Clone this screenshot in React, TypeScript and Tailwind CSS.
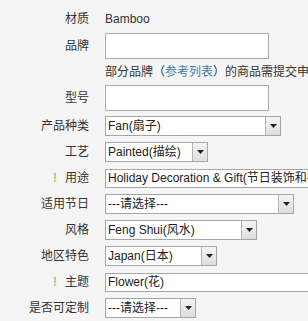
import React from "react";

const font = { fontFamily: '"Liberation Sans", "Noto Sans CJK SC", sans-serif' };

function Label({ text, mark }: { text: string; mark?: boolean }) {
  return (
    <div className="w-[90px] shrink-0 text-right text-[12px] text-[#333] pr-[1px] whitespace-nowrap">
      {mark && <span className="text-[#a3c96a] font-bold mr-[8px]">!</span>}
      {text}
    </div>
  );
}

function Select({ value, width }: { value: string; width: number }) {
  return (
    <div className="flex h-[20px] bg-white border border-[#a7a7a7] shrink-0" style={{ width }}>
      <div className="flex-1 px-[2px] text-[12px] leading-[18px] text-[#222] whitespace-nowrap overflow-hidden">{value}</div>
      <div className="w-[15px] border-l border-[#b4b4b4] bg-gradient-to-b from-[#f4f4f4] to-[#dedede] flex items-center justify-center">
        <svg width="7" height="4" viewBox="0 0 7 4">
          <path d="M0 0h7L3.5 4z" fill="#222" />
        </svg>
      </div>
    </div>
  );
}

function TextBox({ value }: { value: string }) {
  return (
    <div className="h-[19px] w-[240px] shrink-0 bg-white border border-[#a7a7a7] px-[2px] text-[12px] leading-[17px] text-[#222] whitespace-nowrap overflow-hidden">
      {value}
    </div>
  );
}

export default function App() {
  const selects: { label: string; mark?: boolean; value: string; width?: number; text?: boolean }[] = [
    { label: "产品种类", value: "Fan(扇子)", width: 176 },
    { label: "工艺", value: "Painted(描绘)", width: 103 },
    { label: "用途", mark: true, value: "Holiday Decoration & Gift(节日装饰和礼品)", text: true },
    { label: "适用节日", value: "---请选择---", width: 189 },
    { label: "风格", value: "Feng Shui(风水)", width: 152 },
    { label: "地区特色", value: "Japan(日本)", width: 112 },
    { label: "主题", mark: true, value: "Flower(花)", text: true },
    { label: "是否可定制", value: "---请选择---", width: 91 },
  ];

  return (
    <div className="w-[308px] h-[321px] overflow-hidden bg-[#f5f5f5] pt-[9px]" style={font}>
      <div className="flex items-center h-[20px] gap-[15px]">
        <Label text="材质" />
        <span className="text-[12px] text-[#333]">Bamboo</span>
      </div>

      <div className="flex items-center h-[26px] gap-[15px] mt-[4px]">
        <Label text="品牌" />
        <div className="w-[164px] h-[26px] bg-white border border-[#a5acb4]" />
      </div>

      <div className="flex items-center h-[26px] gap-[15px]">
        <div className="w-[90px] shrink-0" />
        <span className="text-[12px] text-[#333] whitespace-nowrap">
          部分品牌（<span className="text-[#3b7ea8]">参考列表</span>）的商品需提交申请
        </span>
      </div>

      <div className="flex items-center h-[26px] gap-[15px]">
        <Label text="型号" />
        <div className="w-[164px] h-[26px] bg-white border border-[#a5acb4]" />
      </div>

      <div className="mt-[2px]">
        {selects.map((s) => (
          <div key={s.label} className="flex items-center h-[26px] gap-[15px]">
            <Label text={s.label} mark={s.mark} />
            {s.text ? <TextBox value={s.value} /> : <Select value={s.value} width={s.width ?? 100} />}
          </div>
        ))}
      </div>
    </div>
  );
}
